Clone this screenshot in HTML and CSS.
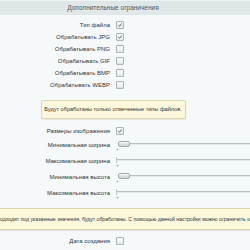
FILE: index.html
```html
<!DOCTYPE html>
<html lang="ru">
<head>
<meta charset="utf-8">
<link rel="stylesheet" href="styles.css">
</head>
<body>
<div class="page">
  <div class="section-head">Дополнительные ограничения</div>
  <div class="group first">
    <div class="row"><div class="label">Тип файла</div><div class="ctrl"><span class="cb on"><svg viewBox="0 0 7 7"><polyline points="1.5,3.6 3,5 5.6,1.6"/></svg></span></div></div>
    <div class="row"><div class="label">Обрабатывать JPG</div><div class="ctrl"><span class="cb on"><svg viewBox="0 0 7 7"><polyline points="1.5,3.6 3,5 5.6,1.6"/></svg></span></div></div>
    <div class="row"><div class="label">Обрабатывать PNG</div><div class="ctrl"><span class="cb"></span></div></div>
    <div class="row"><div class="label">Обрабатывать GIF</div><div class="ctrl"><span class="cb"></span></div></div>
    <div class="row"><div class="label">Обрабатывать BMP</div><div class="ctrl"><span class="cb"></span></div></div>
    <div class="row"><div class="label">Обрабатывать WEBP</div><div class="ctrl"><span class="cb"></span></div></div>
  </div>
  <div class="note-row"><div class="note">Будут обработаны только отмеченные типы файлов.</div></div>
  <div class="row"><div class="label">Размеры изображения</div><div class="ctrl"><span class="cb on"><svg viewBox="0 0 7 7"><polyline points="1.5,3.6 3,5 5.6,1.6"/></svg></span></div></div>
  <div class="srow"><div class="label">Минимальная ширина</div><div class="ctrl"><div class="slider"><span class="handle"></span><span class="track"></span></div><span class="plus">+</span></div></div>
  <div class="srow"><div class="label">Максимальная ширина</div><div class="ctrl"><div class="slider"><span class="tick"></span><span class="track"></span></div><span class="plus">+</span></div></div>
  <div class="srow"><div class="label">Минимальная высота</div><div class="ctrl"><div class="slider"><span class="handle"></span><span class="track"></span></div><span class="plus">+</span></div></div>
  <div class="srow"><div class="label">Максимальная высота</div><div class="ctrl"><div class="slider"><span class="tick"></span><span class="track"></span></div><span class="plus">+</span></div></div>
  <div class="note wide"><span class="lead">Только изображения, которые&nbsp;п</span><span class="rest">одходят под указанные значения, будут обработаны. С помощью данной настройки можно ограничить обработку файлов.</span></div>
  <div class="row last"><div class="label">Дата создания</div><div class="ctrl"><span class="cb"></span></div></div>
</div>
</body>
</html>
```

FILE: styles.css
```css
html, body {
  margin: 0;
  padding: 0;
  background: #f5f9f9;
  overflow: hidden;
}
body {
  font-family: "Liberation Sans", Arial, sans-serif;
  font-size: 6px;
  color: #333;
  width: 250px;
  height: 250px;
}
.page {
  width: 450px;
  margin-left: -112px;
}
.section-head {
  height: 14px;
  border-top: 1px solid #eef3f4;
  background: #e0e7e9;
  color: #4a5a5e;
  font-size: 6.5px;
  line-height: 14px;
  text-align: center;
}
.group.first {
  padding-top: 4px;
}
.row {
  display: grid;
  grid-template-columns: 50% 50%;
  height: 12px;
  align-items: center;
}
.label {
  text-align: right;
  padding-right: 3px;
  white-space: nowrap;
}
.ctrl {
  display: flex;
  align-items: center;
  padding-left: 3px;
}
.cb {
  width: 6px;
  height: 6px;
  border: 1px solid #a9b3b5;
  border-radius: 1px;
  background: linear-gradient(#ffffff, #e3e8e9);
  display: block;
}
.cb svg {
  display: block;
  width: 6px;
  height: 6px;
}
.cb polyline {
  fill: none;
  stroke: #4a5356;
  stroke-width: 1;
}
.note-row {
  display: flex;
  justify-content: center;
  padding: 9px 0 6px;
}
.note {
  background: #fbf8dc;
  border: 1px solid #dcd6ad;
  border-radius: 2px;
  box-shadow: 0 1px 1px rgba(0,0,0,0.08);
  height: 17px;
  line-height: 17px;
  white-space: nowrap;
  color: #333;
  font-size: 5.6px;
}
.note-row .note {
  width: 143px;
  text-align: center;
}
.srow {
  display: grid;
  grid-template-columns: 50% 50%;
  height: 16px;
  align-items: center;
}
.srow .ctrl {
  flex-direction: column;
  align-items: stretch;
  padding-left: 3px;
}
.slider {
  display: flex;
  align-items: center;
  height: 6px;
  margin-top: 2px;
}
.handle {
  width: 10px;
  height: 4px;
  border: 1px solid #a4adaf;
  border-radius: 2px;
  background: linear-gradient(#f6f7f7, #c9cfd0);
  margin-left: 2px;
  flex: none;
}
.tick {
  width: 1px;
  height: 6px;
  background: #c2c9ca;
  flex: none;
}
.track {
  flex: 1;
  height: 1px;
  background: #b9c0c1;
  box-shadow: 0 1px 0 #e3e8e9;
}
.plus {
  font-size: 5px;
  line-height: 5px;
  color: #9aa3a5;
  height: 5px;
}
.note.wide {
  margin-top: 7px;
  height: 20px;
  line-height: 20px;
  border-radius: 0;
  border-left: none;
  border-right: none;
  display: flex;
  font-size: 5.15px;
}
.lead {
  width: 112px;
  flex: none;
  display: flex;
  justify-content: flex-end;
}
.rest {
  flex: none;
}
.row.last {
  margin-top: 5px;
}
```
